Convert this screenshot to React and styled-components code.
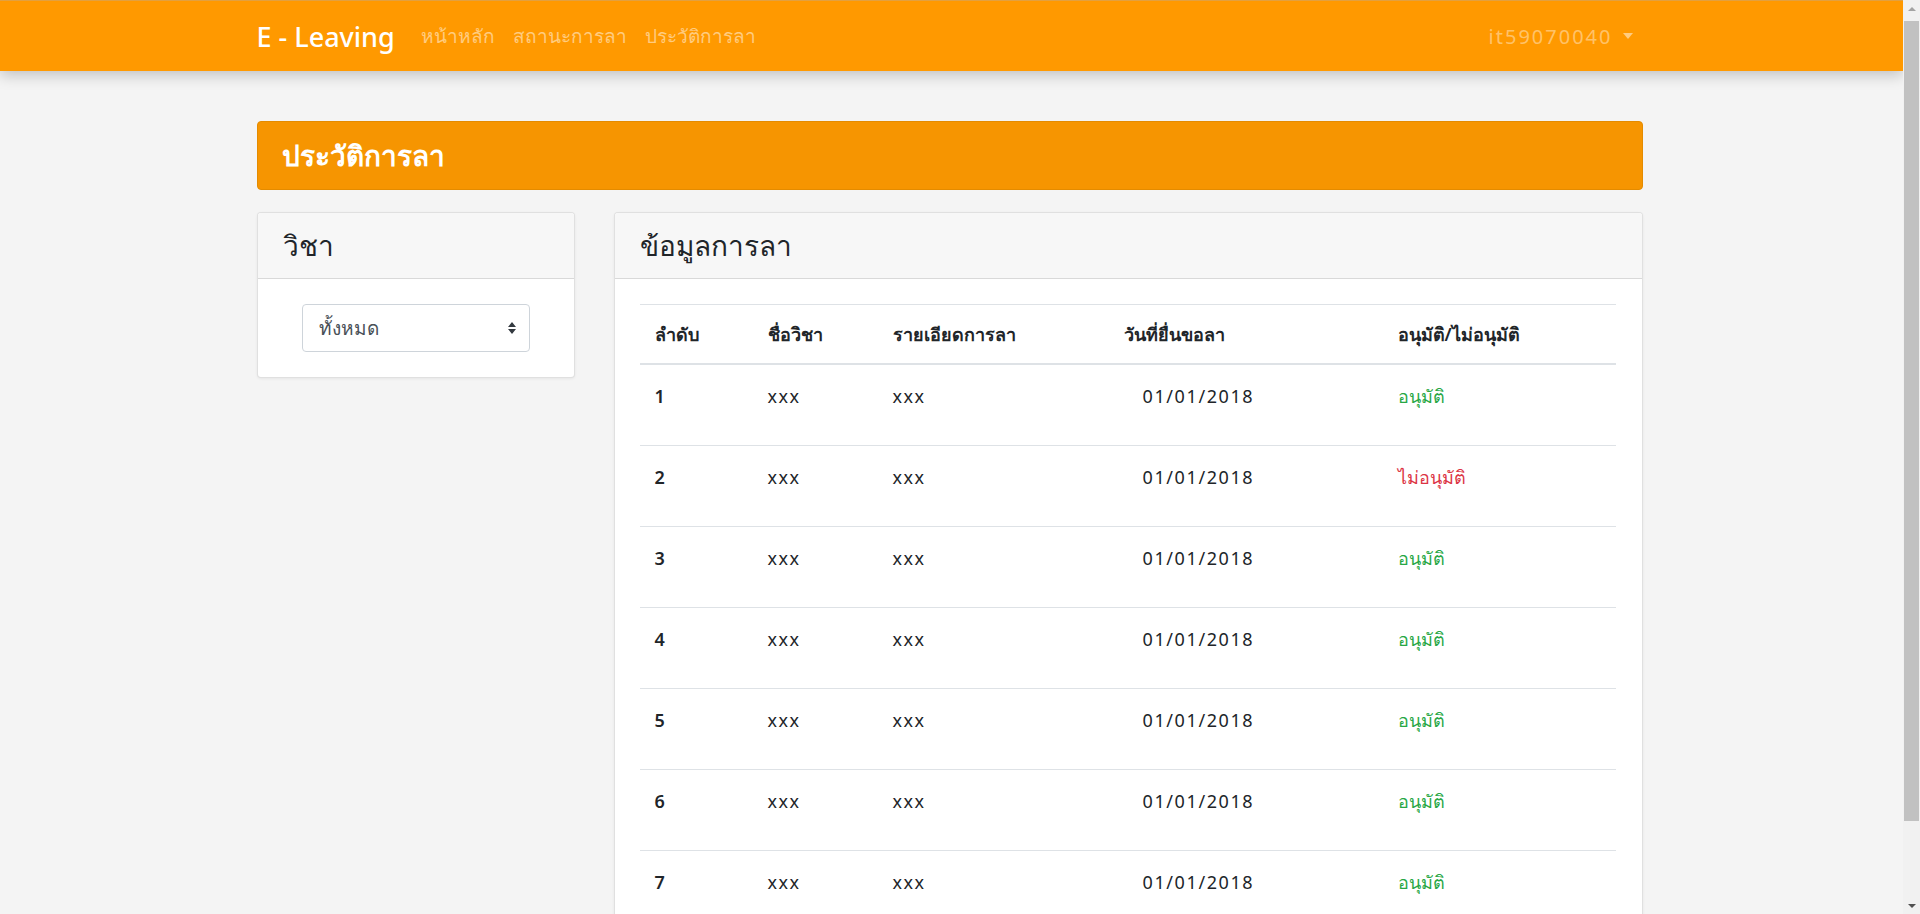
import React from "react";
import styled, { createGlobalStyle } from "styled-components";

const GlobalStyle = createGlobalStyle`
  html, body { scrollbar-width: none; }
  html::-webkit-scrollbar { display: none; }
  body {
    margin: 0;
    background: #f4f4f4;
    font-family: "Noto Sans", "Open Sans", sans-serif;
    color: #212529;
  }
  * { box-sizing: border-box; }
`;

const Page = styled.div`
  margin-right: 17px;
`;

const ScrollTrack = styled.div`
  position: fixed;
  top: 0;
  right: 0;
  width: 17px;
  height: 100vh;
  background: #f1f1f1;
  display: flex;
  flex-direction: column;
  align-items: center;
`;

const ScrollArrow = styled.div`
  height: 17px;
  width: 17px;
  display: flex;
  align-items: center;
  justify-content: center;
  &::before {
    content: "";
    border-left: 4px solid transparent;
    border-right: 4px solid transparent;
    ${(p) =>
      p.$down
        ? "border-top: 4px solid #505050;"
        : "border-bottom: 4px solid #a3a3a3;"}
  }
`;

const ScrollThumb = styled.div`
  width: 15px;
  height: 800px;
  margin-top: 4px;
  background: #c1c1c1;
`;

const Spacer = styled.div`
  flex: 1;
`;

const Navbar = styled.nav`
  height: 71px;
  background: #ff9900;
  border-top: 1px solid #e2a040;
  box-shadow: 0 4px 14px rgba(0, 0, 0, 0.22);
`;

const NavInner = styled.div`
  width: 1386px;
  height: 100%;
  margin-left: calc((100% - 1386px) / 2 - 2px);
  display: flex;
  align-items: center;
`;

const Brand = styled.a`
  color: #fff;
  font-size: 27px;
  font-weight: 500;
  margin-right: 26px;
  text-decoration: none;
  white-space: nowrap;
`;

const NavLink = styled.a`
  color: rgba(255, 255, 255, 0.5);
  font-size: 19px;
  margin-right: 18px;
  text-decoration: none;
  white-space: nowrap;
`;

const UserMenu = styled.a`
  margin-left: auto;
  margin-right: 10px;
  color: rgba(255, 255, 255, 0.42);
  font-size: 20px;
  letter-spacing: 2px;
  display: flex;
  align-items: center;
  gap: 10px;
  text-decoration: none;
`;

const Caret = styled.span`
  width: 0;
  height: 0;
  border-left: 5px solid transparent;
  border-right: 5px solid transparent;
  border-top: 6px solid rgba(255, 255, 255, 0.5);
`;

const Container = styled.main`
  width: 1386px;
  margin: 50px 0 40px calc((100% - 1386px) / 2 - 2px);
`;

const Banner = styled.div`
  height: 69px;
  background: #f69501;
  border: 1px solid #e48b00;
  border-radius: 4px;
  display: flex;
  align-items: center;
  padding: 0 24px;
  color: #fff;
  font-size: 28px;
  font-weight: 600;
`;

const Columns = styled.div`
  margin-top: 22px;
  display: grid;
  grid-template-columns: 318px 1fr;
  gap: 39px;
  align-items: start;
`;

const Card = styled.section`
  background: #fff;
  border: 1px solid rgba(0, 0, 0, 0.12);
  border-radius: 4px;
  box-shadow: 0 1px 3px rgba(0, 0, 0, 0.06);
  overflow: hidden;
`;

const CardHeader = styled.header`
  height: 66px;
  background: #f7f7f7;
  border-bottom: 1px solid rgba(0, 0, 0, 0.12);
  display: flex;
  align-items: center;
  padding: 0 25px;
  font-size: 28px;
  color: #212529;
`;

const CardBody = styled.div`
  padding: ${(p) => p.$pad || "25px"};
`;

const Select = styled.div`
  width: 228px;
  height: 48px;
  margin: 0 auto;
  border: 1px solid #ced4da;
  border-radius: 4px;
  display: flex;
  align-items: center;
  justify-content: space-between;
  padding: 0 13px 0 16px;
  font-size: 19px;
  color: #495057;
`;

const Table = styled.table`
  width: 100%;
  border-collapse: collapse;
  font-size: 18px;
  line-height: 24px;
`;

const Th = styled.th`
  text-align: left;
  font-weight: 600;
  padding: 0 15px;
  height: 59px;
  border-top: 1px solid #dee2e6;
  border-bottom: 2px solid #dee2e6;
  width: ${(p) => p.$w || "auto"};
`;

const Td = styled.td`
  padding: 19px 15px 37px ${(p) => (p.$indent ? "34px" : "15px")};
  vertical-align: top;
  border-top: ${(p) => (p.$first ? "none" : "1px solid #dee2e6")};
  font-weight: ${(p) => (p.$bold ? 600 : 400)};
  letter-spacing: ${(p) => p.$spacing || "0"};
  color: ${(p) =>
    p.$status === "ok" ? "#28a745" : p.$status === "no" ? "#dc3545" : "#212529"};
`;

const rows = [
  { n: 1, ok: true },
  { n: 2, ok: false },
  { n: 3, ok: true },
  { n: 4, ok: true },
  { n: 5, ok: true },
  { n: 6, ok: true },
  { n: 7, ok: true },
];

function SortArrows() {
  return (
    <svg width="8" height="12" viewBox="0 0 8 12">
      <path d="M4 0 L8 5 H0 Z M4 12 L8 7 H0 Z" fill="#343a40" />
    </svg>
  );
}

export default function App() {
  return (
    <>
      <GlobalStyle />
      <Page>
        <Navbar>
          <NavInner>
            <Brand>E - Leaving</Brand>
            <NavLink>หน้าหลัก</NavLink>
            <NavLink>สถานะการลา</NavLink>
            <NavLink>ประวัติการลา</NavLink>
            <UserMenu>
              it59070040
              <Caret />
            </UserMenu>
          </NavInner>
        </Navbar>
        <Container>
          <Banner>ประวัติการลา</Banner>
          <Columns>
            <Card>
              <CardHeader>วิชา</CardHeader>
              <CardBody $pad="25px 0 25px">
                <Select>
                  <span>ทั้งหมด</span>
                  <SortArrows />
                </Select>
              </CardBody>
            </Card>
            <Card>
              <CardHeader>ข้อมูลการลา</CardHeader>
              <CardBody $pad="25px 26px 25px 25px">
                <Table>
                  <thead>
                    <tr>
                      <Th $w="113px">ลำดับ</Th>
                      <Th $w="125px">ชื่อวิชา</Th>
                      <Th $w="231px">รายเอียดการลา</Th>
                      <Th $w="274px">วันที่ยื่นขอลา</Th>
                      <Th>อนุมัติ/ไม่อนุมัติ</Th>
                    </tr>
                  </thead>
                  <tbody>
                    {rows.map((r, i) => (
                      <tr key={r.n}>
                        <Td $first={i === 0} $bold>{r.n}</Td>
                        <Td $first={i === 0} $spacing="1.5px">xxx</Td>
                        <Td $first={i === 0} $spacing="1.5px">xxx</Td>
                        <Td $first={i === 0} $indent $spacing="1.6px">01/01/2018</Td>
                        <Td $first={i === 0} $status={r.ok ? "ok" : "no"}>
                          {r.ok ? "อนุมัติ" : "ไม่อนุมัติ"}
                        </Td>
                      </tr>
                    ))}
                  </tbody>
                </Table>
              </CardBody>
            </Card>
          </Columns>
        </Container>
      </Page>
      <ScrollTrack>
        <ScrollArrow />
        <ScrollThumb />
        <Spacer />
        <ScrollArrow $down />
      </ScrollTrack>
    </>
  );
}
